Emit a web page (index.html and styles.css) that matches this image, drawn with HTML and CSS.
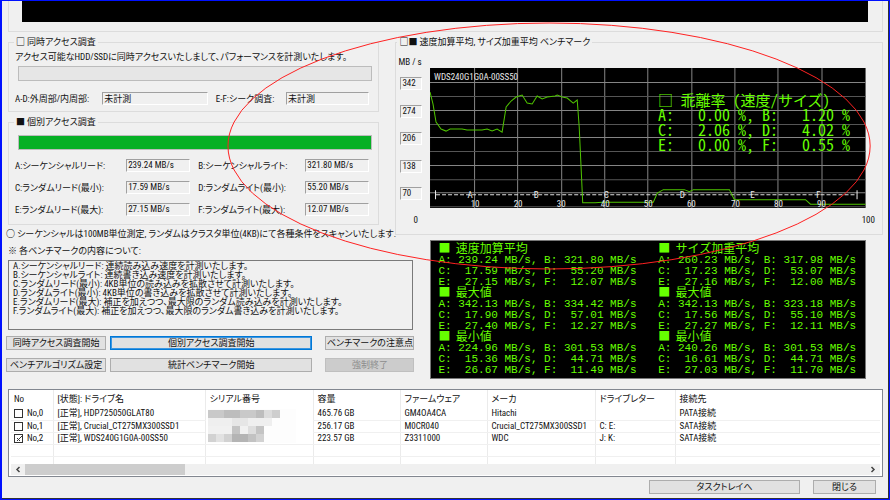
FILE: index.html
```html
<!DOCTYPE html>
<html lang="ja">
<head>
<meta charset="utf-8">
<title>ベンチマーク</title>
<link rel="stylesheet" href="styles.css">
</head>
<body>
<main class="window">
  <div class="monitor"><div class="monitor-screen"></div></div>

  <div class="upper">
    <div class="left">
      <fieldset class="group">
        <legend><b>□</b> 同時アクセス調査</legend>
        <p class="lead">アクセス可能なHDD/SSDに同時アクセスいたしまして、パフォーマンスを計測いたします。</p>
        <div class="bar"></div>
        <div class="seek">
          <label for="ad">A-D:外周部/内周部:</label><input id="ad" class="sunken" readonly value="未計測">
          <label for="ef">E-F:シーク調査:</label><input id="ef" class="sunken" readonly value="未計測">
        </div>
      </fieldset>
      <fieldset class="group">
        <legend>■ 個別アクセス調査</legend>
        <div class="bar full"></div>
        <div class="results">
          <label for="ra">A:シーケンシャルリード:</label><input id="ra" class="sunken" readonly value="239.24 MB/s">
          <label for="rb">B:シーケンシャルライト:</label><input id="rb" class="sunken" readonly value="321.80 MB/s">
          <label for="rc">C:ランダムリード(最小):</label><input id="rc" class="sunken" readonly value="17.59 MB/s">
          <label for="rd">D:ランダムライト(最小):</label><input id="rd" class="sunken" readonly value="55.20 MB/s">
          <label for="re">E:ランダムリード(最大):</label><input id="re" class="sunken" readonly value="27.15 MB/s">
          <label for="rf">F:ランダムライト(最大):</label><input id="rf" class="sunken" readonly value="12.07 MB/s">
        </div>
      </fieldset>
      <p class="note"><b>○</b> シーケンシャルは100MB単位測定, ランダムはクラスタ単位(4KB)にて各種条件をスキャンいたします.</p>
    </div>

    <fieldset class="group graph">
      <legend><b>□</b>■ 速度加算平均, サイズ加重平均 ベンチマーク</legend>
      <div class="unit">MB / s</div>
      <div class="plot">
        <div class="scale">
          <output class="sunken">342</output>
          <output class="sunken">274</output>
          <output class="sunken">206</output>
          <output class="sunken">138</output>
          <output class="sunken">70</output>
        </div>
        <div class="chart">
          <svg viewBox="0 0 435 140" role="img" aria-label="MB / s">
            <rect width="435" height="140" fill="#000"/>
            <path class="grid" d="M44.5 0V140M87.500 0V140M131.500 0V140M174.500 0V140M217.500 0V140M261.500 0V140M304.500 0V140M347.500 0V140M391.500 0V140M0 14.500H435M0 42.500H435M0 69.500H435M0 97.500H435M0 124.500H435"/>
            <path class="grid dim" d="M0 28.500H435M0 56.500H435M0 83.500H435M0 111.500H435M0 138.500H435"/>
            <path class="phase" d="M6 126.500H425"/>
            <path class="ends" d="M5.500 122V131M426.500 122V131"/>
            <polyline class="curve" points="0,24 3,36 6,54 11,61 16,63 20,61 32,61 37,62 52,62 57,61 62,63 67,61 72,64 76,39 81,33 86,29 92,27 97,35 102,36 107,28 112,31 117,29 125,28 127,27 132,29 137,30 143,35 147,32 149,59 151,102 152.500,134.500 165,134.500 172,134 223,134 227,125 233,121.500 254,121.500 259,123.500 263,121.500 299,121.500 304,131.500 375,131.500 380,136 435,136"/>
            <g class="marks">
              <text x="40" y="130">A</text><text x="106" y="130">B</text><text x="176" y="130">C</text>
              <text x="252" y="130">D</text><text x="322" y="130">E</text><text x="388" y="130">F</text>
              <text x="45" y="139">10</text><text x="88" y="139">20</text><text x="131" y="139">30</text>
              <text x="175" y="139">40</text><text x="218" y="139">50</text><text x="261" y="139">60</text>
              <text x="305" y="139">70</text><text x="348" y="139">80</text><text x="391" y="139">90</text>
            </g>
            <text class="model" x="4" y="12">WDS240G1G0A-00SS50</text>
          </svg>
          <div class="deviation">
            <h2>□ 乖離率 (速度/サイズ)</h2>
<pre>A:   0.00 %, B:   1.20 %
C:   2.06 %, D:   4.02 %
E:   0.00 %, F:   0.55 %</pre>
          </div>
        </div>
      </div>
      <div class="ends-row"><span>0</span><span>100</span></div>
    </fieldset>
  </div>

  <div class="lower">
    <div class="about">
      <label class="about-title" for="about">※ 各ベンチマークの内容について:</label>
      <textarea id="about" readonly>A.シーケンシャルリード: 連続読み込み速度を計測いたします。
B.シーケンシャルライト: 連続書き込み速度を計測いたします。
C.ランダムリード(最小): 4KB単位の読み込みを拡散させて計測いたします。
D.ランダムライト(最小): 4KB単位の書き込みを拡散させて計測いたします。
E.ランダムリード(最大): 補正を加えつつ、最大限のランダム読み込みを計測いたします。
F.ランダムライト(最大): 補正を加えつつ、最大限のランダム書き込みを計測いたします。</textarea>
      <div class="actions">
        <button type="button">同時アクセス調査開始</button>
        <button type="button" class="focused">個別アクセス調査開始</button>
        <button type="button" class="apart">ベンチマークの注意点</button>
        <button type="button">ベンチアルゴリズム設定</button>
        <button type="button">統計ベンチマーク開始</button>
        <button type="button" class="apart" disabled>強制終了</button>
      </div>
    </div>
    <div class="console">
      <div>
        <h3>■  速度加算平均</h3>
<pre>A: 239.24 MB/s, B: 321.80 MB/s
C:  17.59 MB/s, D:  55.20 MB/s
E:  27.15 MB/s, F:  12.07 MB/s</pre>
        <h3>■  最大値</h3>
<pre>A: 342.13 MB/s, B: 334.42 MB/s
C:  17.90 MB/s, D:  57.01 MB/s
E:  27.40 MB/s, F:  12.27 MB/s</pre>
        <h3>■  最小値</h3>
<pre>A: 224.96 MB/s, B: 301.53 MB/s
C:  15.36 MB/s, D:  44.71 MB/s
E:  26.67 MB/s, F:  11.49 MB/s</pre>
      </div>
      <div>
        <h3>■  サイズ加重平均</h3>
<pre>A: 260.23 MB/s, B: 317.98 MB/s
C:  17.23 MB/s, D:  53.07 MB/s
E:  27.16 MB/s, F:  12.00 MB/s</pre>
        <h3>■  最大値</h3>
<pre>A: 342.13 MB/s, B: 323.18 MB/s
C:  17.56 MB/s, D:  55.10 MB/s
E:  27.27 MB/s, F:  12.11 MB/s</pre>
        <h3>■  最小値</h3>
<pre>A: 240.26 MB/s, B: 301.53 MB/s
C:  16.61 MB/s, D:  44.71 MB/s
E:  27.03 MB/s, F:  11.70 MB/s</pre>
      </div>
    </div>
  </div>

  <div class="drives">
    <table>
      <colgroup><col class="c-no"><col class="c-name"><col class="c-serial"><col class="c-size"><col class="c-size"><col class="c-maker"><col class="c-letter"><col></colgroup>
      <thead>
        <tr><th>No</th><th>[状態]: ドライブ名</th><th>シリアル番号</th><th>容量</th><th>ファームウェア</th><th>メーカ</th><th>ドライブレター</th><th>接続先</th></tr>
      </thead>
      <tbody>
        <tr>
          <td><label class="tick"><input type="checkbox">No,0</label></td><td>[正常], HDP725050GLAT80</td>
          <td class="serial" rowspan="3">
            <svg width="92" height="34" viewBox="0 0 92 34" aria-hidden="true">
              <rect width="88" height="34" fill="#fdfdfd"/>
              <path fill="#c9c9c9" d="M0 1h16v8H0zM32 1h16v8H32z"/>
              <path fill="#bdbdbd" d="M16 1h16v8H16zM48 1h8v8h-8z"/>
              <path fill="#dcdcdc" d="M56 1h8v8h-8z"/>
              <path fill="#cecece" d="M64 1h8v8h-8z"/>
              <path fill="#efefef" d="M0 9h24v8H0zM40 9h24v8H40z"/>
              <path fill="#e6e6e6" d="M24 9h16v8H24z"/>
              <path fill="#f1f1f1" d="M0 17h24v8H0zM32 17h8v8h-8z"/>
              <path fill="#c4c4c4" d="M24 17h8v8h-8zM48 17h8v8h-8z"/>
              <path fill="#dedede" d="M40 17h8v8h-8z"/>
              <path fill="#d2d2d2" d="M0 25h8v8H0zM16 25h8v8h-8zM48 25h8v8h-8z"/>
              <path fill="#e2e2e2" d="M8 25h8v8H8z"/>
              <path fill="#b4b4b4" d="M24 25h16v8H24z"/>
              <path fill="#c2c2c2" d="M40 25h8v8h-8z"/>
            </svg>
          </td>
          <td>465.76 GB</td><td>GM4OA4CA</td><td>Hitachi</td><td></td><td>PATA接続</td>
        </tr>
        <tr><td><label class="tick"><input type="checkbox">No,1</label></td><td>[正常], Crucial_CT275MX300SSD1</td><td>256.17 GB</td><td>M0CR040</td><td>Crucial_CT275MX300SSD1</td><td>C: E:</td><td>SATA接続</td></tr>
        <tr><td><label class="tick"><input type="checkbox" checked>No,2</label></td><td>[正常], WDS240G1G0A-00SS50</td><td>223.57 GB</td><td>Z3311000</td><td>WDC</td><td>J: K:</td><td>SATA接続</td></tr>
        <tr><td></td><td></td><td></td><td></td><td></td><td></td><td></td><td></td></tr>
        <tr class="cut"><td></td><td></td><td></td><td></td><td></td><td></td><td></td><td></td></tr>
      </tbody>
    </table>
    <div class="scrollbar">
      <svg width="14" height="11" viewBox="0 0 14 11"><path d="M8.500 3L6 5.500L8.500 8"/></svg>
      <div class="track"><div class="thumb"></div></div>
      <svg width="14" height="11" viewBox="0 0 14 11"><path d="M5.500 3L8 5.500L5.500 8"/></svg>
    </div>
  </div>

  <div class="footer">
    <button type="button" class="tray">タスクトレイへ</button>
    <button type="button" class="close">閉じる</button>
  </div>

  <svg class="circle" aria-hidden="true"><ellipse cx="61.9%" cy="146" rx="36.2%" ry="123"/></svg>
</main>
</body>
</html>
```
FILE: styles.css
```css
* { box-sizing: border-box; }

body {
  margin: 0;
  background: #0010f0;
  color: #111;
  font: 9px/12px "Roboto Condensed", Lato, "Noto Sans CJK JP", sans-serif;
  font-feature-settings: "palt";
}

button, input, textarea { font: inherit; color: inherit; font-feature-settings: inherit; }
p, h2, h3, pre { margin: 0; font: inherit; }
b { font-family: "Noto Sans CJK JP", sans-serif; line-height: 1; }

.window {
  position: relative;
  min-height: 100vh;
  padding: 0 6px 4px 6px;
  border: solid #0010ff;
  border-width: 1px 1px 1px 2px;
  background: #f0f0f0;
  box-shadow: inset -1px -1px #333;
}

.monitor {
  padding: 0 14px 9px 13px;
  border: 1px solid #dcdcdc;
  border-top: 0;
}
.monitor-screen { height: 21px; background: #000; }

.upper {
  display: grid;
  grid-template-columns: 371fr 487fr;
  align-items: start;
  gap: 16px;
  padding: 4px 0 1px;
}
.left { min-width: 0; }

.group {
  min-width: 0;
  margin: 0;
  padding: 0 6px;
  border: 1px solid #dcdcdc;
}
.group legend { height: 12px; margin-left: -1px; padding: 0 2px; }
.left .group { margin-bottom: 4px; }

.lead { margin-top: 3px; white-space: nowrap; }

.bar {
  height: 15px;
  margin: 3px 0 0 3px;
  border: 1px solid #bcbcbc;
  background: #e6e6e6;
}
.bar.full { margin-top: 7px; background: #06b025; }

.sunken {
  width: 100%;
  min-width: 0;
  height: 13px;
  padding: 0 1px 1px;
  border: 1px solid;
  border-color: #a0a0a0 #fff #fff #a0a0a0;
  background: #f0f0f0;
  line-height: 10px;
}

.seek, .results {
  display: grid;
  align-items: center;
  white-space: nowrap;
  padding-right: 3px;
}
.seek {
  grid-template-columns: 87fr 105fr 8px 70fr 83fr;
  margin: 11px 0 6px;
}
.seek label:nth-of-type(2), .results label:nth-of-type(even) { grid-column: 4; }
.results {
  grid-template-columns: 111fr 64fr 8px 107fr 64fr;
  row-gap: 9px;
  margin: 9px 0 8px;
}

.note { height: 10px; line-height: 10px; margin-left: -2px; white-space: nowrap; }

.graph { padding: 0 5px 0 2px; }
.unit { margin-top: 8px; }
.plot {
  display: grid;
  grid-template-columns: 22px 1fr;
  column-gap: 8px;
  padding: 0 11px 0 2px;
}
.scale {
  display: flex;
  flex-direction: column;
  justify-content: space-between;
  padding: 9px 0 8px;
}
.chart { position: relative; }
.chart svg { display: block; width: 100%; }
.grid { stroke: #858585; }
.grid.dim { stroke: #555; }
.phase { stroke: #ddd; stroke-dasharray: 4 2; }
.ends { stroke: #eee; }
.curve { fill: none; stroke: #4fc400; }
.marks { fill: #e8e8e8; text-anchor: middle; }
.model { fill: #e8e8e8; }

.deviation {
  position: absolute;
  top: 25px;
  right: 16px;
  color: #6f0;
  font: 16px/15px "Noto Sans CJK JP", sans-serif;
  font-feature-settings: "hwid";
}
.deviation h2 { font-size: 15px; line-height: 14px; }

.ends-row {
  display: flex;
  justify-content: space-between;
  padding: 6px 2px 8px 15px;
}

.lower {
  display: grid;
  grid-template-columns: 408fr 435fr;
  column-gap: 16px;
  padding-right: 17px;
  margin-left: -2px;
}
.about-title { display: block; margin: 5px 0 3px 2px; }
.about textarea {
  display: block;
  width: calc(100% - 3px);
  height: 70px;
  margin-left: 2px;
  padding: 1px 4px;
  border: 1px solid #7a7a7a;
  background: #f0f0f0;
  line-height: 9px;
  white-space: pre;
  overflow: hidden;
  resize: none;
}
.actions {
  display: grid;
  grid-template-columns: 100fr 202fr 98fr;
  gap: 8px 4px;
  margin-top: 6px;
}
.actions .apart { margin-left: 9px; }

button {
  height: 14px;
  padding: 0;
  border: 1px solid #adadad;
  background: #e1e1e1;
  line-height: 12px;
  white-space: nowrap;
}
button.focused { border: 1px solid #0078d7; box-shadow: inset 0 0 0 1px #3c96e0; }
button:disabled { border-color: #bfbfbf; background: #ccc; color: #8c8c8c; }

.console {
  display: grid;
  grid-template-columns: 223fr 210fr;
  padding: 3px 0 2px 7px;
  border: 1px solid #777;
  background: #000;
  color: #6f0;
  font: 11px/11px "Liberation Mono", monospace;
  font-feature-settings: normal;
}
.console h3 {
  margin-bottom: 3px;
  font: 12px/8px "Noto Sans CJK JP", sans-serif;
  white-space: pre;
}

.drives {
  margin-top: 10px;
  border: 1px solid #828790;
  background: #fff;
  padding: 0 2px 1px;
}
.drives table { width: 100%; table-layout: fixed; border-collapse: collapse; }
.drives th, .drives td {
  height: 12px;
  padding: 0 0 0 4px;
  border-left: 1px solid #ebebeb;
  border-bottom: 1px solid #f0f0f0;
  font-weight: normal;
  line-height: 11px;
  text-align: left;
  white-space: nowrap;
}
.drives th { height: 18px; border-bottom: 0; }
.drives th:first-child, .drives td:first-child { border-left: 0; padding-left: 3px; }
.drives .cut td { height: 8px; border-bottom: 0; }
.drives td.serial { padding: 0 0 0 2px; border-left: 1px solid #ebebeb; }
.serial svg { display: block; }
.c-no { width: 42px; }
.c-name { width: 152px; }
.c-serial { width: 108px; }
.c-size { width: 87px; }
.c-maker { width: 108px; }
.c-letter { width: 80px; }

.tick { display: flex; align-items: center; gap: 4px; }
.tick input {
  appearance: none;
  width: 9px;
  height: 9px;
  margin: 0;
  border: 1px solid #333;
  background: #fff;
}
.tick input:checked {
  background: linear-gradient(45deg, transparent 42%, #333 42% 56%, transparent 56%) 2px 3px / 3px 3px no-repeat,
    linear-gradient(-45deg, transparent 40%, #333 40% 58%, transparent 58%) 2px 1px / 5px 5px no-repeat, #fff;
}

.scrollbar { display: flex; background: #f0f0f0; }
.scrollbar svg { fill: none; stroke: #444; stroke-width: 1.5; }
.track { flex: 1; }
.thumb { width: 19%; height: 11px; background: #cdcdcd; }

.footer {
  display: flex;
  justify-content: flex-end;
  gap: 13px;
  padding: 3px 7px 0 0;
}
.tray { width: 151px; }
.close { width: 63px; }

.circle {
  position: absolute;
  top: -1px;
  left: -2px;
  width: 100%;
  height: 300px;
  fill: none;
  stroke: #f22;
  pointer-events: none;
}
```
